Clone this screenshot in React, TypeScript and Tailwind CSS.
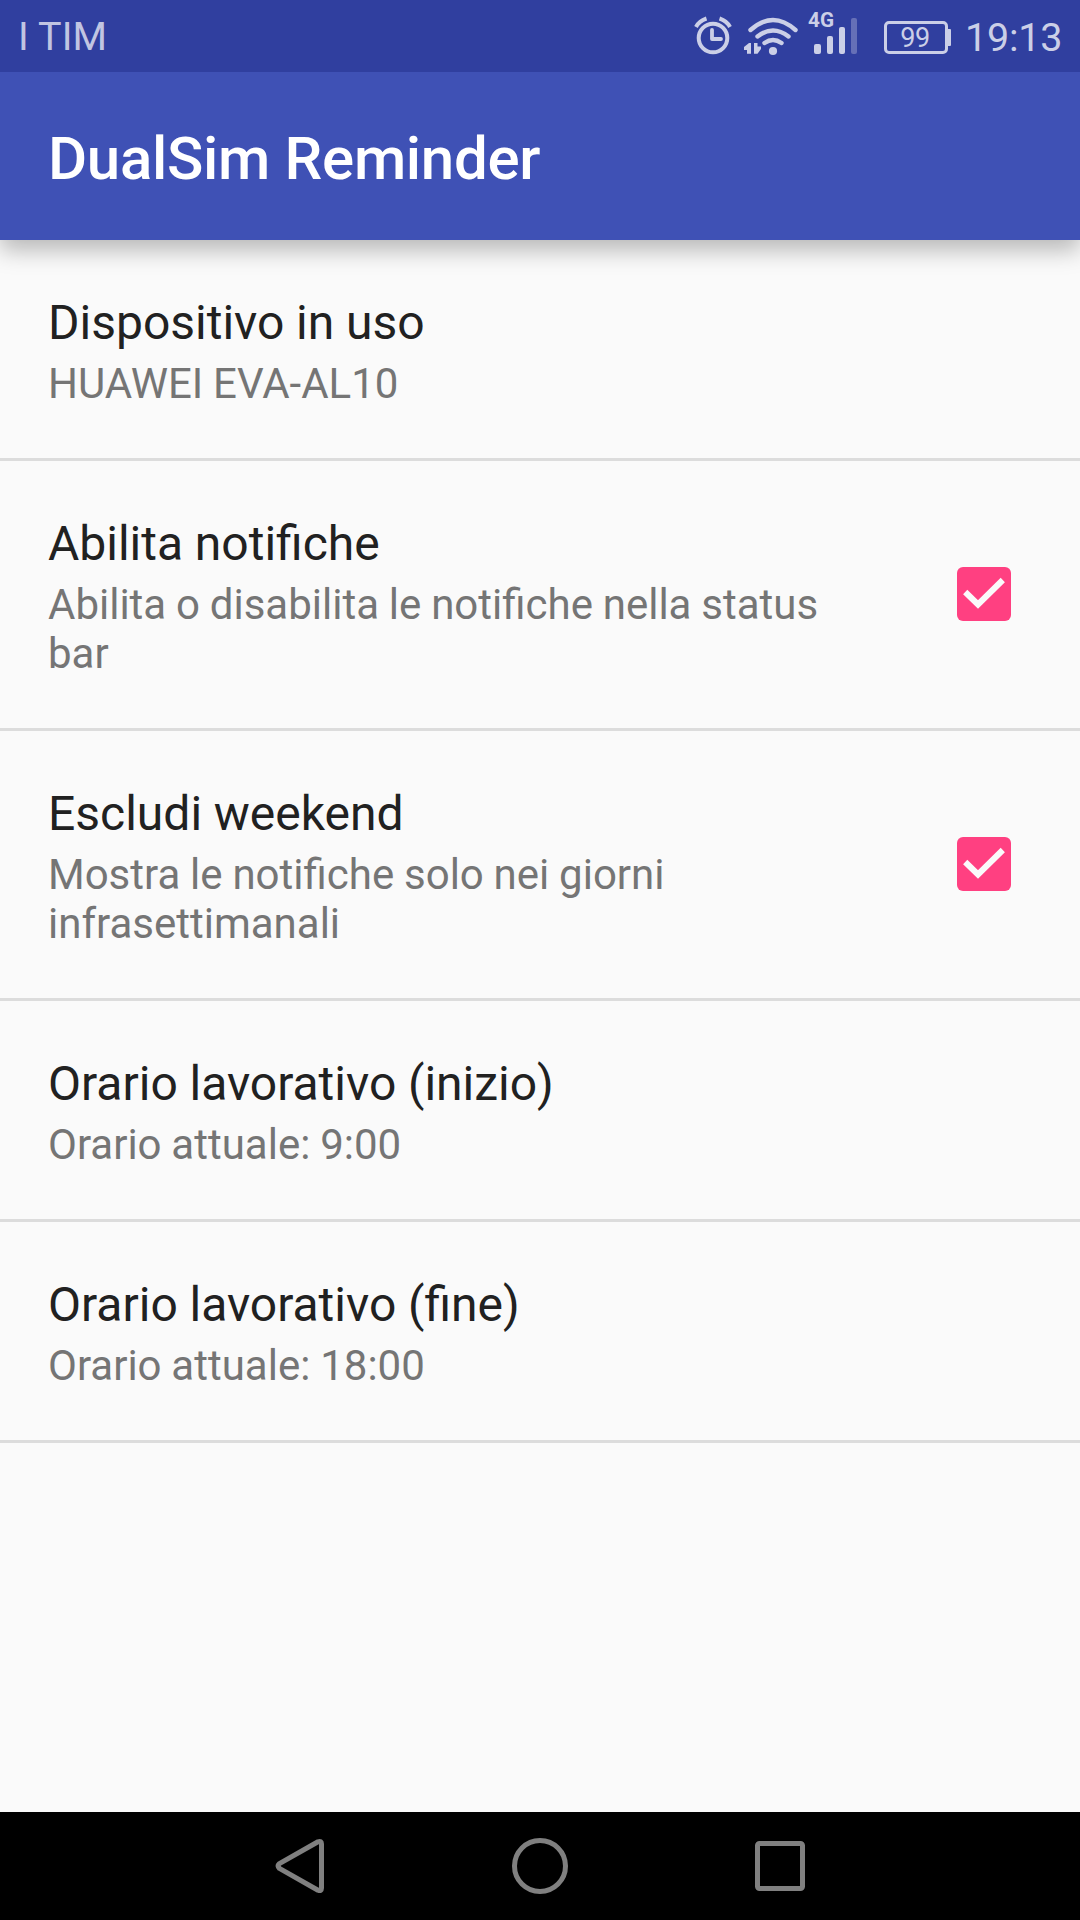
import React from "react";

type Pref = { title: string; summary: string[]; checked?: boolean };

const prefs: Pref[] = [
  { title: "Dispositivo in uso", summary: ["HUAWEI EVA-AL10"] },
  {
    title: "Abilita notifiche",
    summary: ["Abilita o disabilita le notifiche nella status", "bar"],
    checked: true,
  },
  {
    title: "Escludi weekend",
    summary: ["Mostra le notifiche solo nei giorni", "infrasettimanali"],
    checked: true,
  },
  { title: "Orario lavorativo (inizio)", summary: ["Orario attuale: 9:00"] },
  { title: "Orario lavorativo (fine)", summary: ["Orario attuale: 18:00"] },
];

function StatusBar() {
  return (
    <div className="relative z-20 flex h-[72px] shrink-0 items-center justify-between bg-[#303f9f] pl-[18px] text-[39.5px] leading-[72px]">
      <span className="pt-[2px] tracking-[0.1px] text-[#c1c5e2]">I TIM</span>
      <div className="flex h-full items-center text-[#cbcfe7]">
        <svg width="180" height="72" viewBox="0 0 180 72" fill="none" stroke="currentColor">
          {/* alarm clock */}
          <g strokeWidth="4">
            <circle cx="24" cy="38" r="14.3" />
            <path d="M23 30V39H32" strokeWidth="3.8" strokeLinejoin="round" strokeLinecap="round" />
            <path d="M7 27Q10 21 17.500 18.500M41 27Q38 21 30.500 18.500" />
          </g>
          {/* wifi with traffic arrows */}
          <g strokeWidth="4.400" strokeLinecap="round">
            <path d="M61.500 30Q84 10 106.500 30" />
            <path d="M68.500 36.500Q84 24.500 99.500 36.500" />
            <path d="M75.500 43Q84 37 92.500 43" />
          </g>
          <circle cx="84" cy="51" r="4.100" fill="currentColor" stroke="none" />
          <path
            d="M62 43V53.700H58V50H55V47L60 43ZM65 43H68.500V46.500H72V49L68.500 53.700H65Z"
            fill="currentColor"
            stroke="none"
          />
          {/* signal strength */}
          <g fill="currentColor" stroke="none">
            <rect x="125" y="44" width="7" height="10" rx="2" />
            <rect x="138" y="36" width="6" height="18" rx="2" />
            <rect x="150" y="27" width="6" height="27" rx="2" />
            <rect x="162" y="18" width="6" height="36" rx="2" fill="#6670b7" />
            <text x="119" y="27" fontFamily="Roboto" fontWeight="700" fontSize="20" textLength="26" lengthAdjust="spacingAndGlyphs">
              4G
            </text>
          </g>
        </svg>
        <div className="ml-[15px] mt-[3px] flex items-center">
          <div className="flex h-[33px] w-[64px] items-center justify-center rounded-[5px] border-[3px] border-[#cbcfe7] pr-[2px] pt-[2px] text-[27px] leading-[27px] tracking-[-0.5px]">
            <span>99</span>
          </div>
          <div className="h-[17px] w-[3px] rounded-r-[1px] bg-[#cbcfe7]" />
        </div>
        <span className="ml-[14px] w-[115px] pt-[3px] tracking-[-0.2px]">19:13</span>
      </div>
    </div>
  );
}

function Checkbox() {
  return (
    <span role="checkbox" aria-checked="true" className="mb-[2px] mr-[69px] h-[54px] w-[54px] shrink-0 rounded-[6px] bg-[#ff4081]">
      <svg width="54" height="54" viewBox="0 0 54 54" fill="none" stroke="#fafafa" strokeWidth="6">
        <path d="M8.200 25L21 37.500L45.800 13" />
      </svg>
    </span>
  );
}

function PrefRow({ pref }: { pref: Pref }) {
  return (
    <li className="flex items-center justify-between border-b-[3px] border-[#dcdcdc] pl-12">
      <div className="pb-[50px] pt-[51px]">
        <h2 className="text-[48px] leading-[64px] text-[#212121] [word-spacing:-0.2px]">{pref.title}</h2>
        <p className="pt-[4px] text-[42px] leading-[49px] text-[#757575] [word-spacing:-0.6px]">
          {pref.summary.map((line) => (
            <span key={line} className="block whitespace-nowrap">
              {line}
            </span>
          ))}
        </p>
      </div>
      {pref.checked && <Checkbox />}
    </li>
  );
}

function NavBar() {
  return (
    <nav className="h-[108px] shrink-0 bg-black">
      <svg width="1080" height="108" viewBox="0 0 1080 108" fill="none" stroke="#808080" strokeWidth="5">
        <path d="M279.400 51.600L318 29.800Q321.500 28.500 321.500 32V76Q321.500 79.500 318 78.200L279.400 56.400Q277 54 279.400 51.600Z" strokeLinejoin="round" />
        <circle cx="540" cy="54" r="25.500" />
        <rect x="757.500" y="31.500" width="45" height="45" rx="2" />
      </svg>
    </nav>
  );
}

export default function App() {
  return (
    <div className="flex h-[1920px] w-[1080px] flex-col overflow-hidden bg-[#fafafa] font-['Roboto',sans-serif]">
      <StatusBar />
      <header className="z-10 flex h-[168px] shrink-0 items-center bg-[#3f51b5] pl-12 pt-[5px] shadow-[0_10px_22px_rgba(0,0,0,0.27)]">
        <h1 className="text-[60px] font-medium leading-[73px] tracking-[-0.3px] text-white">DualSim Reminder</h1>
      </header>
      <ul className="flex-1">
        {prefs.map((p) => (
          <PrefRow key={p.title} pref={p} />
        ))}
      </ul>
      <NavBar />
    </div>
  );
}
